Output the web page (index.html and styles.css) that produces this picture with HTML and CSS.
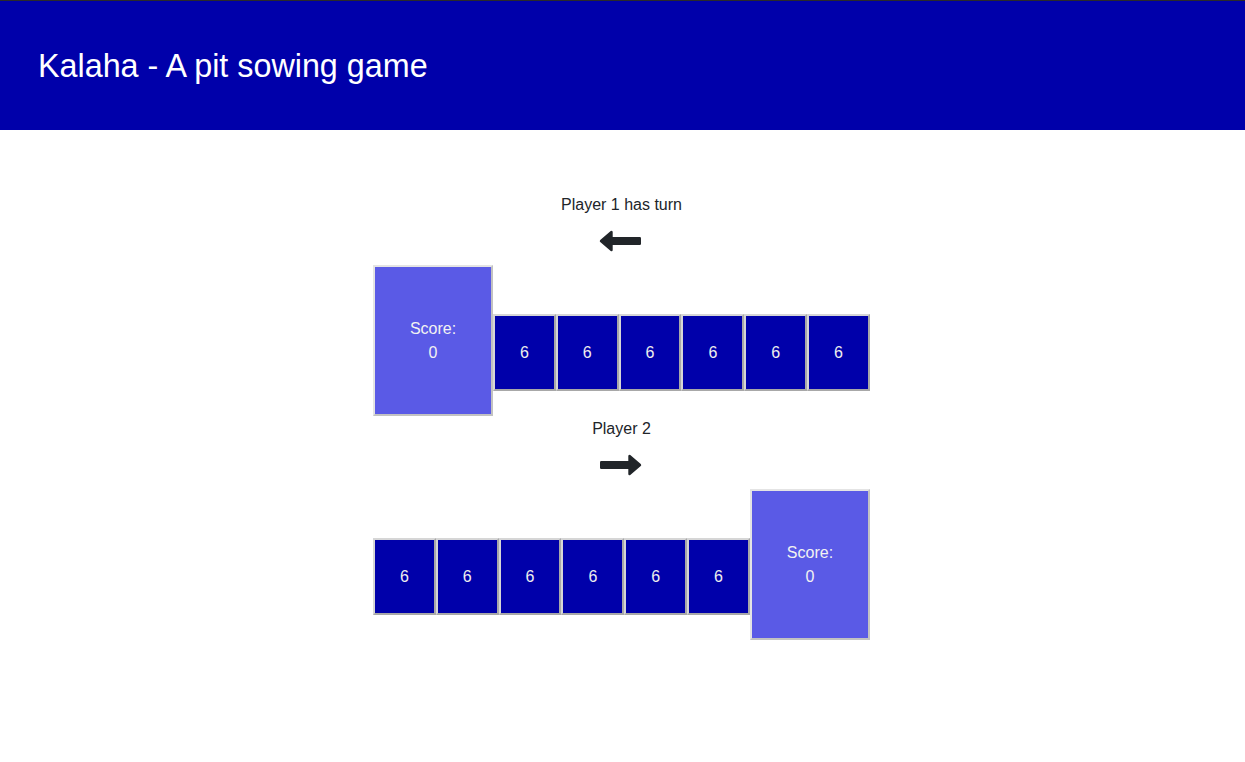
FILE: index.html
```html
<!DOCTYPE html>
<html lang="en">
<head>
<meta charset="utf-8">
<title>Kalaha</title>
<link rel="stylesheet" href="styles.css">
</head>
<body>
<header class="topbar">
  <h1 class="title">Kalaha - A pit sowing game</h1>
</header>
<main class="game">
  <section class="player">
    <div class="label">Player 1 has turn</div>
    <div class="direction">
      <svg class="arrow" width="43" height="22" viewBox="0 0 43 22" aria-hidden="true">
        <path d="M2 11 L12.5 2 L12.5 20 Z" fill="#212529" stroke="#212529" stroke-width="2.4" stroke-linejoin="round"/>
        <rect x="12" y="7" width="30" height="8" rx="1.2" fill="#212529"/>
      </svg>
    </div>
    <div class="board">
      <div class="store"><span>Score:</span><span>0</span></div>
      <div class="pit">6</div>
      <div class="pit">6</div>
      <div class="pit">6</div>
      <div class="pit">6</div>
      <div class="pit">6</div>
      <div class="pit">6</div>
    </div>
  </section>
  <section class="player">
    <div class="label">Player 2</div>
    <div class="direction">
      <svg class="arrow" width="43" height="22" viewBox="0 0 43 22" aria-hidden="true">
        <path d="M41 11 L30.5 2 L30.5 20 Z" fill="#212529" stroke="#212529" stroke-width="2.4" stroke-linejoin="round"/>
        <rect x="1" y="7" width="30" height="8" rx="1.2" fill="#212529"/>
      </svg>
    </div>
    <div class="board">
      <div class="pit">6</div>
      <div class="pit">6</div>
      <div class="pit">6</div>
      <div class="pit">6</div>
      <div class="pit">6</div>
      <div class="pit">6</div>
      <div class="store"><span>Score:</span><span>0</span></div>
    </div>
  </section>
</main>
</body>
</html>
```

FILE: styles.css
```css
* {
  box-sizing: border-box;
}

html, body {
  margin: 0;
  padding: 0;
  background: #ffffff;
}

body {
  font-family: "Liberation Sans", Arial, sans-serif;
  color: #212529;
}

.topbar {
  height: 130px;
  background: #0000aa;
  border-top: 1px solid #2a2a2a;
  display: flex;
  align-items: center;
  padding: 1px 38px 0;
}

.title {
  margin: 0;
  font-size: 32.3px;
  font-weight: normal;
  color: #ffffff;
  line-height: 1;
}

.game {
  padding-top: 62px;
  padding-right: 2px;
  display: flex;
  flex-direction: column;
  align-items: center;
}

.player {
  width: 497px;
  display: flex;
  flex-direction: column;
  align-items: center;
}

.label {
  font-size: 16px;
  line-height: 24px;
  height: 25px;
  padding-top: 1px;
  text-align: center;
}

.direction {
  height: 48px;
  display: flex;
  align-items: center;
  justify-content: center;
  padding-right: 3px;
}

.arrow {
  display: block;
}

.board {
  width: 497px;
  display: flex;
  align-items: last baseline;
}

.store {
  flex: 0 0 120px;
  height: 151px;
  background: #5a5ae6;
  color: #f2f2f2;
  border: 2px solid;
  border-color: #e4e4e4 #c2c2c2 #c2c2c2 #e4e4e4;
  display: flex;
  flex-direction: column;
  justify-content: center;
  align-items: center;
  font-size: 16px;
  line-height: 24px;
}

.pit {
  flex: 1 1 0;
  height: 77px;
  background: #0000aa;
  color: #eeeeee;
  border: 2px solid;
  border-color: #d6d6d6 #a8a8a8 #a8a8a8 #d6d6d6;
  display: flex;
  align-items: center;
  justify-content: center;
  font-size: 16px;
  line-height: 24px;
}
```
